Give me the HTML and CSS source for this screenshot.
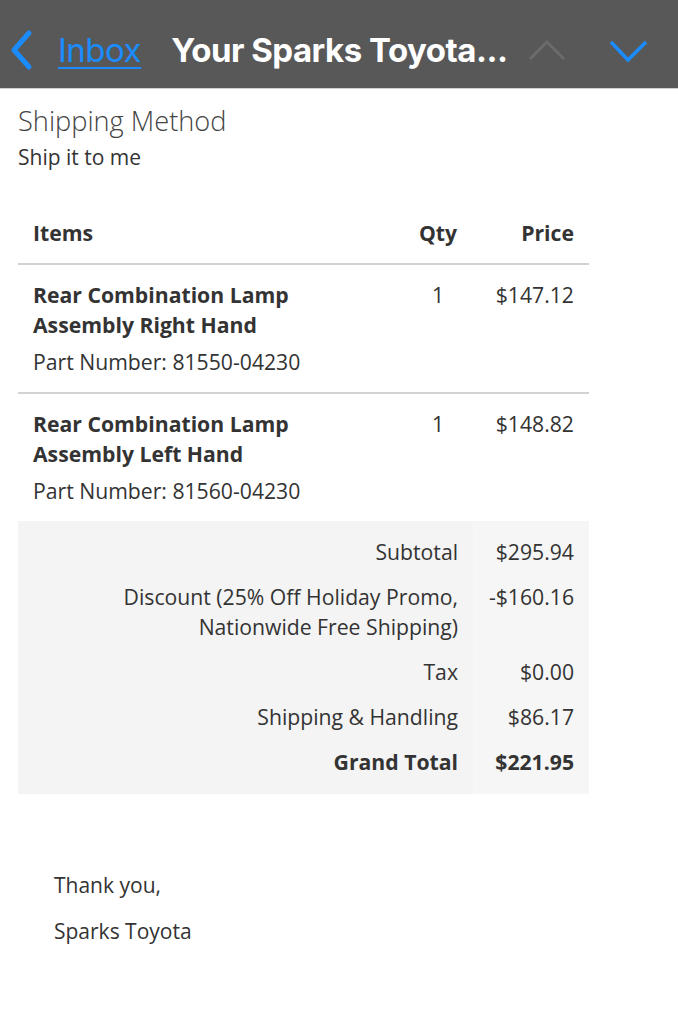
FILE: index.html
```html
<!DOCTYPE html>
<html>
<head>
<meta charset="utf-8">
<link rel="stylesheet" href="styles.css">
</head>
<body>
<header class="navbar">
  <svg class="back" width="24" height="44" viewBox="0 0 24 44"><polyline points="19,5 4,22 19,39" fill="none" stroke="#1a8cff" stroke-width="5" stroke-linecap="round" stroke-linejoin="round"/></svg>
  <a class="inbox" href="#">Inbox</a>
  <span class="title">Your Sparks Toyota...</span>
  <svg class="up" width="40" height="24" viewBox="0 0 40 24"><polyline points="2,20 19,3 36,20" fill="none" stroke="#6b6b6b" stroke-width="3"/></svg>
  <svg class="down" width="40" height="24" viewBox="0 0 40 24"><polyline points="2,3 19,21 37,3" fill="none" stroke="#1a8cff" stroke-width="3.5"/></svg>
</header>
<main class="content">
  <h2 class="ship-title">Shipping Method</h2>
  <p class="ship-value">Ship it to me</p>
  <table class="items">
    <thead>
      <tr><th class="c-item">Items</th><th class="c-qty">Qty</th><th class="c-price">Price</th></tr>
    </thead>
    <tbody>
      <tr class="item-row">
        <td class="c-item"><div class="name">Rear Combination Lamp Assembly Right Hand</div><div class="sku">Part Number: 81550-04230</div></td>
        <td class="c-qty">1</td>
        <td class="c-price">$147.12</td>
      </tr>
      <tr class="item-row last">
        <td class="c-item"><div class="name">Rear Combination Lamp Assembly Left Hand</div><div class="sku">Part Number: 81560-04230</div></td>
        <td class="c-qty">1</td>
        <td class="c-price">$148.82</td>
      </tr>
    </tbody>
    <tfoot>
      <tr class="first"><td colspan="2" class="t-label">Subtotal</td><td class="t-val">$295.94</td></tr>
      <tr><td colspan="2" class="t-label">Discount (25% Off Holiday Promo,<br>Nationwide Free Shipping)</td><td class="t-val">-$160.16</td></tr>
      <tr><td colspan="2" class="t-label">Tax</td><td class="t-val">$0.00</td></tr>
      <tr><td colspan="2" class="t-label">Shipping &amp; Handling</td><td class="t-val">$86.17</td></tr>
      <tr class="grand"><td colspan="2" class="t-label">Grand Total</td><td class="t-val">$221.95</td></tr>
    </tfoot>
  </table>
  <div class="signoff">
    <p>Thank you,</p>
    <p>Sparks Toyota</p>
  </div>
</main>
</body>
</html>
```
FILE: styles.css
```css
* { box-sizing: border-box; }
html, body { margin: 0; padding: 0; background: #fff; }
body { font-family: "Open Sans", "Liberation Sans", sans-serif; color: #333; width: 678px; }

.navbar {
  height: 89px;
  background: #585858;
  border-bottom: 1px solid #cfcfcf;
  display: flex;
  align-items: center;
  padding: 12px 0 0 10px;
  font-family: Inter, Roboto, "Liberation Sans", sans-serif;
}
.back { flex: none; }
.inbox {
  margin-left: 24px;
  color: #1a8cff;
  font-size: 33px;
  font-weight: 400;
  letter-spacing: -0.5px;
  text-decoration: underline;
  text-decoration-thickness: 2px;
  text-underline-offset: 5px;
}
.title {
  margin-left: 30px;
  color: #fff;
  font-size: 33px;
  font-weight: 700;
  letter-spacing: -0.5px;
  white-space: nowrap;
}
.up { flex: none; margin-left: 20px; margin-top: 2px; }
.down { flex: none; margin-left: 41px; margin-top: 2px; }

.content { padding: 0 18px; }
.ship-title {
  margin: 14px 0 0;
  font-size: 27.2px;
  line-height: 36px;
  font-weight: 300;
  color: #444;
}
.ship-value {
  margin: 3px 0 0;
  font-size: 21px;
  line-height: 30px;
  color: #333;
}

.items {
  margin-top: 31px;
  width: 571px;
  border-collapse: collapse;
  font-size: 21.2px;
  line-height: 30px;
}
.items th {
  font-weight: 700;
  padding: 15px;
  border-bottom: 2px solid #d2d2d2;
  text-align: left;
}
.items td { padding: 15px; vertical-align: top; }
.items .c-qty { text-align: center; width: 70px; padding-left: 0; padding-right: 0; }
.items .c-price { text-align: right; width: 116px; }
.item-row td { border-bottom: 2px solid #d2d2d2; }
.item-row.last td { border-bottom: none; }
.name { font-weight: 700; padding-right: 30px; }
.sku { margin-top: 7px; }

.items tfoot td { background: #f4f4f4; padding: 7.5px 15px; text-align: right; }
.items tfoot td.t-val { background: #f6f6f6; }
.items tfoot tr.first td { padding-top: 15.5px; }
.items tfoot tr.grand td { padding-bottom: 17px; font-weight: 700; }

.signoff { padding: 76px 0 0 36px; font-size: 21px; line-height: 30px; }
.signoff p { margin: 0 0 16px; }
```
